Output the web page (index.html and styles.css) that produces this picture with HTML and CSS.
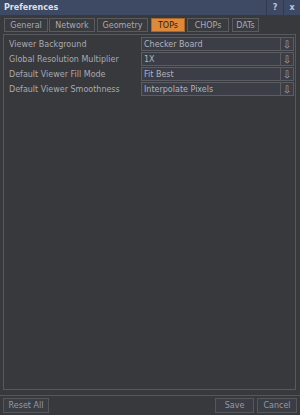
FILE: index.html
```html
<!DOCTYPE html>
<html>
<head>
<meta charset="utf-8">
<link rel="stylesheet" href="styles.css">
</head>
<body>
<div class="win">
  <div class="titlebar">
    <span class="title">Preferences</span>
    <span class="tbtn">?</span>
    <span class="tbtn">x</span>
  </div>
  <div class="tabs">
    <span class="tab t-general">General</span>
    <span class="tab t-network">Network</span>
    <span class="tab t-geometry">Geometry</span>
    <span class="tab t-tops active">TOPs</span>
    <span class="tab t-chops">CHOPs</span>
    <span class="tab t-dats">DATs</span>
  </div>
  <div class="panel">
    <div class="row"><span class="label">Viewer Background</span><span class="field"><span class="val">Checker Board</span><span class="arr">⇩</span></span></div>
    <div class="row"><span class="label">Global Resolution Multiplier</span><span class="field"><span class="val">1X</span><span class="arr">⇩</span></span></div>
    <div class="row"><span class="label">Default Viewer Fill Mode</span><span class="field"><span class="val">Fit Best</span><span class="arr">⇩</span></span></div>
    <div class="row"><span class="label">Default Viewer Smoothness</span><span class="field"><span class="val">Interpolate Pixels</span><span class="arr">⇩</span></span></div>
  </div>
  <div class="footer">
    <span class="btn reset">Reset All</span>
    <span class="spacer"></span>
    <span class="btn save">Save</span>
    <span class="btn cancel">Cancel</span>
  </div>
</div>
</body>
</html>
```
FILE: styles.css
```css
html, body {
  margin: 0;
  padding: 0;
  background: #38393d;
}
.win {
  width: 300px;
  height: 415px;
  display: flex;
  flex-direction: column;
  font-family: "DejaVu Sans", Verdana, sans-serif;
  font-size: 8px;
  color: #b4b5bb;
  box-sizing: border-box;
}
.titlebar {
  height: 15px;
  background: #3e4964;
  display: flex;
  align-items: center;
  border-bottom: 1px solid #323a50;
}
.title {
  flex: 1;
  font-weight: bold;
  color: #dde0e8;
  padding-left: 4px;
  font-size: 8px;
}
.tbtn {
  width: 16px;
  height: 15px;
  display: flex;
  align-items: center;
  justify-content: center;
  border-left: 1px solid #323a50;
  font-weight: bold;
  color: #c0c5d2;
  font-size: 8px;
}
.tabs {
  display: flex;
  gap: 1px;
  padding: 2px 3px 0 4px;
  height: 15px;
}
.tab {
  height: 12px;
  border: 1px solid #5a5b60;
  display: flex;
  align-items: center;
  justify-content: center;
  color: #a9aab1;
  background: #3a3b3f;
  box-sizing: content-box;
}
.t-general { width: 42px; }
.t-network { width: 44px; }
.t-geometry { width: 49px; margin-left: 1px; }
.t-tops { width: 32px; margin-left: 2px; }
.t-chops { width: 40px; margin-left: 1px; }
.t-dats { width: 25px; margin-left: 2px; }
.tab.active {
  background: #df893a;
  color: #2e2214;
  border-color: #a8682c;
}
.panel {
  flex: 1;
  margin: 1px 4px 0 3px;
  border: 1px solid #58595e;
  padding: 2px 1px 0 5px;
  display: flex;
  flex-direction: column;
  gap: 1px;
}
.row {
  display: flex;
  align-items: center;
  height: 14px;
}
.label {
  width: 132px;
  color: #a9aab0;
}
.field {
  flex: 1;
  height: 12px;
  border: 1px solid #5c5d63;
  background: #3c3e47;
  display: flex;
  align-items: center;
}
.val {
  flex: 1;
  padding-left: 2px;
  color: #b2b3ba;
}
.arr {
  width: 12px;
  height: 12px;
  border-left: 1px solid #5c5d63;
  display: flex;
  align-items: center;
  justify-content: center;
  font-size: 10px;
  color: #a4a7b2;
}
.footer {
  height: 19px;
  margin-top: 5px;
  border-top: 1px solid #55565a;
  display: flex;
  align-items: center;
  padding: 0 3px 0 3px;
  gap: 3px;
}
.spacer { flex: 1; }
.btn {
  height: 13px;
  border: 1px solid #55575c;
  display: flex;
  align-items: center;
  justify-content: center;
  color: #969aa4;
  background: #3b3d44;
}
.reset { width: 44px; }
.save { width: 37px; }
.cancel { width: 38px; }
```
